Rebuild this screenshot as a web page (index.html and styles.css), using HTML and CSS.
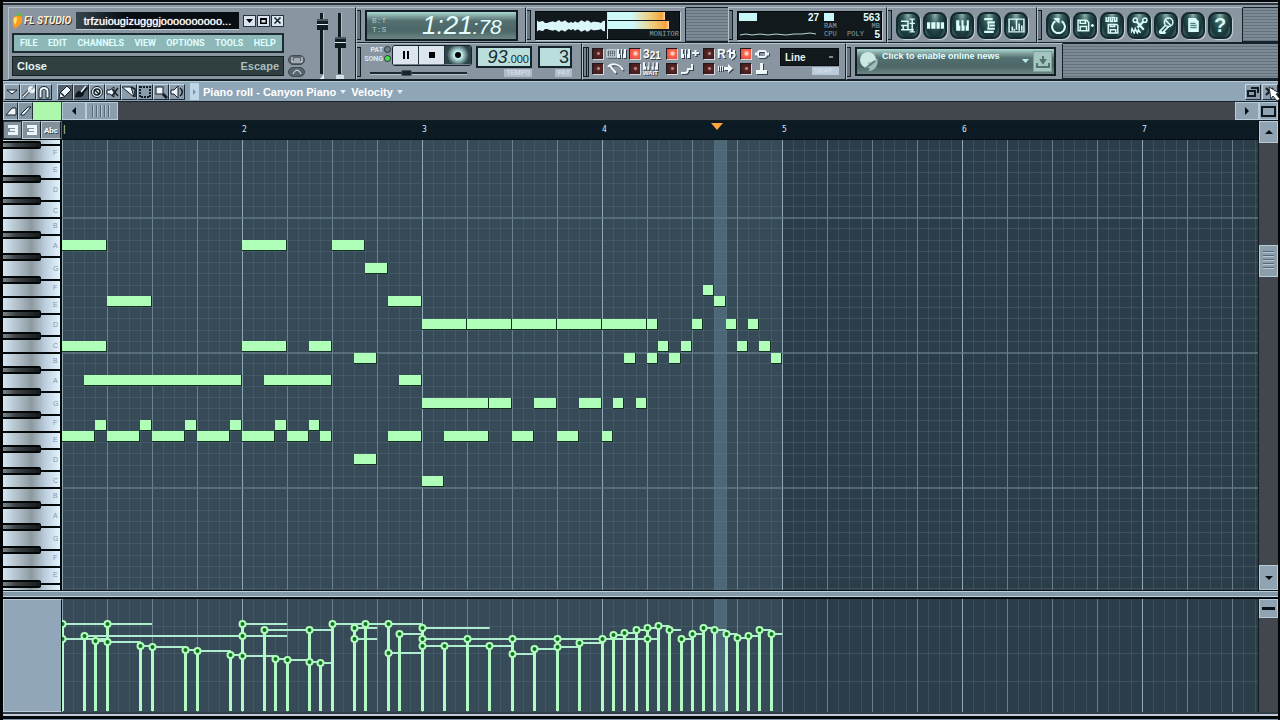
FILE: index.html
```html
<!DOCTYPE html>
<html lang="en">
<head>
<meta charset="utf-8">
<title>FL Studio - Piano roll</title>
<link rel="stylesheet" href="styles.css">
</head>
<body>
<div class="app">
  <header class="toolbar">
    <section class="panel main-panel">
      <div class="main-left">
        <div class="title-row">
          <svg class="fruit" width="12" height="18" viewBox="0 0 12 18"><path d="M5 5C4 3 5 1 7 0c-.500 1.500 0 2 0 3 1-1 3-1 4 0-2 0-3 1-3 2z" fill="#5cc32e"/><path d="M1 6c2-3 8-3 9 0 1 4-3 8-7 11C1 14 0 9 1 6z" fill="#ff9a1c"/><path d="M2 6c1-1 3-1 3 0 0 3-1 5-2 7-1-2-2-5-1-7z" fill="#ffe36b"/></svg>
          <span class="brand">FL STUDIO</span>
          <span class="song">trfzuiougizugggjoooooooooo...</span>
          <div class="win-buttons">
            <button aria-label="Minimize"><svg width="9" height="9" viewBox="0 0 9 9"><path d="M1 3h7L4.500 7z"/></svg></button>
            <button aria-label="Maximize"><svg width="9" height="9" viewBox="0 0 9 9"><path d="M1 2h7v6H1zM2.500 4v2.500h4V4z" fill-rule="evenodd"/></svg></button>
            <button aria-label="Close"><svg width="9" height="9" viewBox="0 0 9 9"><path d="M1.500 1.500l6 6M7.500 1.500l-6 6" stroke="#16242c" stroke-width="1.600"/></svg></button>
          </div>
        </div>
        <nav class="menu">
          <button>FILE</button><button>EDIT</button><button>CHANNELS</button><button>VIEW</button><button>OPTIONS</button><button>TOOLS</button><button>HELP</button>
        </nav>
        <div class="hint"><span>Close</span><span class="hint-key">Escape</span></div>
      </div>
      <div class="pills">
        <button class="pill" aria-label="Typing keyboard"><svg width="12" height="6" viewBox="0 0 12 6"><path d="M1 0v5h10V0M4 1v3M6 1v3M8 1v3" fill="none" stroke="#e5eef2"/></svg></button>
        <button class="pill" aria-label="Auto scroll"><svg width="12" height="6" viewBox="0 0 12 6"><path d="M2 5l2-3 2-1 2 1 2 3" fill="none" stroke="#e5eef2"/></svg></button>
      </div>
      <div class="faders">
        <div class="fader"><input class="volume" type="range" min="0" max="100" value="88" aria-label="Main volume"><svg width="8" height="5" viewBox="0 0 8 5"><path d="M6 0v5H2z" fill="#e8f1f6"/></svg></div>
        <div class="fader"><input class="pitch" type="range" min="0" max="100" value="52" aria-label="Main pitch"><svg width="8" height="5" viewBox="0 0 8 5"><path d="M0 1h8v4H0z" fill="#d5e2e9"/></svg></div>
      </div>
    </section>
    <div class="panel-rows">
      <div class="panel-row upper">
        <section class="panel time-panel"><i class="grip"></i>
          <div class="lcd time"><span class="units"><b>B:T</b><b>T:S</b></span><span class="big">1:21</span><span class="small">:78</span></div>
        </section>
        <section class="panel monitor-panel"><i class="grip"></i>
          <div class="dark monitor">
            <svg id="wave" width="71" height="27"></svg>
            <div class="levels"><div class="level left"></div><div class="level right"></div><span class="monitor-label">MONITOR</span></div>
          </div>
        </section>
        <div class="spacer"></div>
        <section class="panel cpu-panel"><i class="grip"></i>
          <div class="dark cpu">
            <div class="cpu-graph"><div class="cpu-top"><i class="cpu-bar"></i><b>27</b></div><svg width="78" height="8"><path d="M1 5l6-1 6 1 8-1 8 1 8-1 10 1 8-1 8 0 8-1 6 1" fill="none" stroke="#b8d5d8"/></svg></div>
            <div class="mem"><div class="cpu-top"><i class="mem-bar"></i><b>563</b></div><div class="tiny"><span>RAM</span><span>MB</span></div><div class="tiny"><span>CPU</span><span>POLY</span><b>5</b></div></div>
          </div>
        </section>
        <section class="panel views-panel"><i class="grip"></i>
          <button class="oct" aria-label="Playlist"><svg viewBox="0 0 16 16"><path d="M1 4h7M1 8h7M1 12h12M7.500 4v8M3 8v4M9 2h5M11.500 2v12M9 14h5M9 6h5"/></svg></button>
          <button class="oct" aria-label="Step sequencer"><svg viewBox="0 0 16 16"><path class="fill" d="M0 5h3v6H0zM4 5h4v6H4zM9 5h3v6H9zM13 5h3v6h-3z"/></svg></button>
          <button class="oct" aria-label="Piano roll"><svg viewBox="0 0 16 16"><path class="fill" d="M2 3h3v5h1v5H2zM7 3h2v5h1v5H7zM12 3h2v10h-3V8h1z"/></svg></button>
          <button class="oct" aria-label="Browser"><svg viewBox="0 0 16 16"><path d="M3 2h8M6 5h7M8 8h5M6 11h7M3 14h9" stroke-width="2"/><path d="M7 5v6"/></svg></button>
          <button class="oct" aria-label="Mixer"><svg viewBox="0 0 16 16"><path d="M1 2h14v12H1zM8 2v10"/><path d="M4 13V9M6 13v-2M10.500 13V6M13 13V8" stroke-width="1.500"/></svg></button>
        </section>
        <section class="panel tools-panel"><i class="grip"></i>
          <button class="oct" aria-label="Undo"><svg viewBox="0 0 16 16"><path d="M5 4a6 6 0 1 0 6 0" stroke-width="2"/><path class="fill" d="M3 1h6v5L6 4z"/></svg></button>
          <button class="oct" aria-label="Save new version"><svg viewBox="0 0 16 16"><path d="M1 3h8l2 2v8H1zM3 3v3h5V3M3 13V9h6v4M13 8h3M14.500 6.500v3"/></svg></button>
          <button class="oct" aria-label="Render"><svg viewBox="0 0 16 16"><path d="M2 0v4h2V0h2v4h2V0h2v4h2V0M4 7h8l1 1v7H4zM6 7v2h4V7M6 15v-3h5v3"/></svg></button>
          <button class="oct" aria-label="Edit audio"><svg viewBox="0 0 16 16"><path d="M5 4l7 8M12 4L6 10" stroke-width="2"/><circle cx="4" cy="3" r="2"/><circle cx="13" cy="3" r="2"/><path d="M0 15l1-4 2 4 1-4 2 4 1-3 2 3"/></svg></button>
          <button class="oct" aria-label="Record"><svg viewBox="0 0 16 16"><circle cx="10" cy="5" r="4"/><path d="M7 3l5 5M7 8l-5 5 2 2 6-6M2 13c-2 3 4 4 5 1" stroke-width="1.500"/></svg></button>
          <button class="oct" aria-label="Project info"><svg viewBox="0 0 16 16"><path class="fill" d="M3 1h7l3 3v10H3z"/><path d="M5 6h5M5 8h6M5 10h6" style="stroke:#4e8583"/></svg></button>
          <button class="oct help" aria-label="Help">?</button>
        </section>
        <div class="rack"></div>
      </div>
      <div class="panel-row lower">
        <section class="panel transport"><i class="grip"></i>
          <div class="transport-main">
            <div class="transport-top">
              <div class="modes"><label>PAT<input type="radio" name="mode"></label><label>SONG<input type="radio" name="mode" checked></label></div>
              <div class="play-buttons">
                <button aria-label="Pause"><svg width="12" height="12"><path d="M3 2h2v8H3zM7 2h2v8H7z"/></svg></button>
                <button aria-label="Stop"><svg width="12" height="12"><path d="M3 3h6v6H3z"/></svg></button>
                <button class="rec" aria-label="Record"><svg width="12" height="12"><circle cx="6" cy="6" r="3"/></svg></button>
              </div>
            </div>
            <input class="song-pos" type="range" min="0" max="100" value="36" aria-label="Song position">
          </div>
          <div class="readout"><div class="lcd2 tempo"><span>93</span><small>.000</small></div><span class="caption">TEMPO</span></div>
          <div class="readout"><div class="lcd2 pattern"><span>3</span></div><span class="caption">PAT</span></div>
        </section>
        <section class="panel switch-panel"><i class="grip wide"></i>
          <div class="switches">
            <label><input type="checkbox" aria-label="Typing keyboard to piano"><svg viewBox="0 0 20 14"><rect x="1" y="3" width="9" height="7"/><path d="M3 5h5M3 8h5" stroke-dasharray="1 1"/><path class="solid" d="M11 2h2v5h1v4h-3zM15 2h1v9h-1zM18 2h2v9h-3V7h1z"/></svg></label>
            <label><input type="checkbox" checked aria-label="Countdown"><span class="sw-text">3<sub>2</sub><sub>1</sub></span></label>
            <label><input type="checkbox" checked aria-label="Blend recording"><svg viewBox="0 0 20 14"><path class="solid" d="M1 2h2v5h1v4H1zM5 2h1v9H5zM8 2h2v9H7V7h1z"/><path d="M12 6h7M15.500 3v6" stroke-width="2"/></svg></label>
            <label><input type="checkbox" aria-label="Loop recording"><span class="sw-text">R</span><svg class="half" viewBox="0 0 10 14"><path d="M1 5l3-2v8M4 6h4v-3M8 6c2 3-1 5-3 6" stroke-width="2"/></svg></label>
            <label><input type="checkbox" checked aria-label="Multilink"><svg viewBox="0 0 20 14"><path d="M1 7h4M11 7h4" stroke-width="3"/><rect x="4" y="4" width="8" height="6" rx="2" stroke-width="2"/></svg></label>
            <label><input type="checkbox" aria-label="Metronome"><svg viewBox="0 0 20 14"><path d="M4 4l6 7M2 5C5 1 13 1 17 8" stroke-width="2"/></svg></label>
            <label><input type="checkbox" aria-label="Wait for input"><span class="wait"><svg viewBox="0 0 14 7"><path class="solid" d="M0 0h2v4h1v3H0zM5 0h1v7H4V4h1zM9 0h1v7H8V4h1zM12 0h2v7h-3V4h1z"/></svg>WAIT</span></label>
            <label><input type="checkbox" aria-label="Step editing"><svg viewBox="0 0 20 14"><path d="M1 11h4c3 0 3-2 3-4h4V2" stroke-width="2"/></svg></label>
            <label><input type="checkbox" aria-label="Auto scroll view"><svg viewBox="0 0 20 14"><path d="M1.500 4v5M3.500 4v5M5.500 4v5"/><path class="solid" d="M7 5h4V2l5 4.500L11 11V8H7z"/></svg></label>
            <label><input type="checkbox" aria-label="Note grouping"><svg viewBox="0 0 20 14"><path class="solid" d="M6 1h3v7h4v4H2V8h4z"/></svg></label>
          </div>
          <div class="readout snap"><select aria-label="Snap"><option>Line</option></select><span class="caption">SNAP</span></div>
        </section>
        <section class="panel news-panel"><i class="grip"></i>
          <div class="lcd news">
            <svg width="20" height="22" viewBox="0 0 20 22"><circle cx="9" cy="9" r="8" fill="#cce8e3"/><path d="M8 11c4 1 8-1 10-4 2 6-1 13-9 13 3-2 2-6-1-9z" fill="#a2bdb8"/><path d="M7 17l9-7" stroke="#5d7e7c" stroke-width="2"/></svg>
            <span class="news-text">Click to enable online news</span>
            <svg width="8" height="5"><path d="M0 0h7L3.500 4z" fill="#bcebe8"/></svg>
            <button aria-label="Download news"><svg width="14" height="14"><path d="M7 1v5M5 5h4L7 8z" fill="#53736f" stroke="#53736f" stroke-width="2"/><path d="M1 8v4h12V8" fill="none" stroke="#53736f" stroke-width="2"/></svg></button>
          </div>
        </section>
        <div class="rack"></div>
      </div>
    </div>
  </header>

  <div class="roll-title">
    <div class="tool-group">
      <button aria-label="Menu"><svg viewBox="0 0 14 14"><path d="M2 5h10l-5 4z" class="white"/></svg></button>
      <button aria-label="Tools"><svg viewBox="0 0 14 14"><path d="M2 12l6-6" class="thick"/><path d="M2 12l6-6M8 6c-1-3 1-5 3-4L9 4l2 2 2-2c1 3-2 5-5 2" class="line"/></svg></button>
      <button aria-label="Snap to grid"><svg viewBox="0 0 14 14"><path d="M2 13V6c0-6 10-6 10 0v7H9V6c0-2-4-2-4 0v7z" class="white"/></svg></button>
    </div>
    <div class="tool-group">
      <button class="on" aria-label="Draw"><svg viewBox="0 0 14 14"><path d="M1 13l1-5 7-7 4 4-7 7z" class="white"/><path d="M3 8l3 3" class="ink"/></svg></button>
      <button class="on" aria-label="Paint"><svg viewBox="0 0 14 14"><path d="M1 12c1-6 4-7 7-6l4-5 2 2-4 5c0 4-4 5-9 4z" fill="#0d171c"/><path d="M7 7l5-6" class="line"/></svg></button>
      <button aria-label="Delete"><svg viewBox="0 0 14 14"><circle cx="7" cy="7" r="5.500" class="white"/><circle cx="7" cy="7" r="3" class="ink"/><path d="M5 5l4 4" class="ink"/></svg></button>
      <button aria-label="Mute"><svg viewBox="0 0 14 14"><path d="M1 5h3l4-3v10L4 9H1z" class="white"/><path d="M6 4l6 7M12 3L6 11" class="ink"/></svg></button>
      <button aria-label="Slice"><svg viewBox="0 0 14 14"><path d="M0 2h9l3 10z" class="white"/><path d="M9 2l4 2v8" class="ink"/></svg></button>
      <button aria-label="Select"><svg viewBox="0 0 14 14"><rect x="2" y="2" width="10" height="10" fill="none" stroke="#142028" stroke-width="2" stroke-dasharray="2 1"/></svg></button>
      <button aria-label="Zoom"><svg viewBox="0 0 14 14"><rect x="2" y="2" width="7" height="7" class="white"/><path d="M9 9l4 4" class="thick"/></svg></button>
      <button aria-label="Playback"><svg viewBox="0 0 14 14"><path d="M1 5h3l4-4v12L4 9H1z" class="white"/><path d="M10 3c3 2 3 6 0 8" class="ink"/></svg></button>
    </div>
    <button class="tab-arrow" aria-label="Previous"><svg width="4" height="6"><path d="M0 0l3 3-3 3z" fill="#7892a8"/></svg></button>
    <button class="crumb">Piano roll - Canyon Piano<i></i></button>
    <button class="crumb">Velocity<i></i></button>
    <div class="roll-window">
      <button aria-label="Detach"><svg viewBox="0 0 14 14"><path d="M5 3h7v5M2 6h7v5H2z" fill="none" stroke="#111c23" stroke-width="2"/></svg></button>
      <button aria-label="Close piano roll"><svg viewBox="0 0 14 14"><path d="M3 3l8 8M10 3l-7 7" stroke="#111c23" stroke-width="2"/></svg></button>
    </div>
    <svg class="cursor" width="12" height="15" viewBox="0 0 12 15"><path d="M1 1l10 6-3 1 4 5-3 2-4-5-2 3z" fill="#fff" stroke="#27323a"/></svg>
  </div>

  <div class="scroll-row">
    <button class="flat" aria-label="Slide"><svg viewBox="0 0 14 14"><path d="M2 11l6-7h4v7z" class="white"/></svg></button>
    <button class="flat" aria-label="Porta"><svg viewBox="0 0 14 14"><path d="M2 10l7-7h3L5 11H2z" class="white"/></svg></button>
    <button class="note-color" aria-label="Note colour"></button>
    <button class="arrow left" aria-label="Scroll left"></button>
    <div class="h-track"><div class="h-thumb"></div></div>
    <button class="arrow right" aria-label="Scroll right"></button>
    <button class="zoom-box" aria-label="Zoom full"><i></i></button>
  </div>

  <main class="roll">
    <div class="key-tools">
      <button class="pressed" aria-label="Stamp"><svg viewBox="0 0 14 14"><path d="M2 2h10v10H2V9h7V8H4V6h5V5H2z" class="solid-white"/></svg></button>
      <button aria-label="Ghost notes"><svg viewBox="0 0 14 14"><path d="M2 2h10v10H2V9h7V8H4V6h5V5H2z" class="solid-white"/></svg></button>
      <button class="abc">Abc</button>
    </div>
    <div class="ruler"><span>|</span><span>2</span><span>3</span><span>4</span><span>5</span><span>6</span><span>7</span><i class="marker"></i></div>
    <button class="arrow up" aria-label="Scroll up"></button>
    <div class="keys"><svg id="keys"></svg></div>
    <div class="canvas"><svg id="notes"></svg></div>
    <div class="v-track"><div class="v-thumb"></div><button class="arrow down" aria-label="Scroll down"></button></div>
    <div class="divider"></div>
    <div class="vel-side"></div>
    <div class="canvas"><svg id="velocity"></svg></div>
    <div class="v-track vel-track"><button class="minus" aria-label="Toggle event size"><i></i></button></div>
  </main>
  <footer class="bottom-edge"></footer>
</div>
<script src="roll.js"></script>
</body>
</html>
```
FILE: styles.css
```css
* { box-sizing: border-box; }
body { margin: 0; background: #020405; font-family: "Liberation Sans", Arial, sans-serif; color: #fff; }
button { margin: 0; padding: 0; border: 0; background: none; font: inherit; color: inherit; display: flex; align-items: center; justify-content: center; }
input, select { margin: 0; }
svg { display: block; flex: none; }
.app { height: 100vh; display: flex; flex-direction: column; padding: 0 2px 0 3px; overflow: hidden; }

/* toolbar */
.toolbar { display: flex; flex: none; height: 81px; padding-left: 5px; border-top: 2px solid #05090d; box-shadow: inset 0 1px #aeb9c3, inset 0 3px #2c353d; background: #8b98a2; padding-top: 5px; border-bottom: 1px solid #121d24; }
.panel { display: flex; align-items: center; background: #8995a0; border: 1px solid #b3c0ca; border-right-color: #142129; border-bottom-color: #142129; flex: none; }
.main-panel { width: 348px; padding: 3px 4px 2px 3px; align-items: flex-start; }
.main-left { width: 272px; display: flex; flex-direction: column; gap: 3px; }
.title-row { display: flex; height: 19px; align-items: center; }
.brand { width: 52px; font: italic bold 10px Roboto, "Liberation Sans", sans-serif; white-space: nowrap; color: #fff0d6; text-shadow: 1px 1px #413226; }
.song { flex: 1; min-width: 0; height: 18px; font-size: 11px; line-height: 19px; background: linear-gradient(90deg, #35454b, #070d12 30%); border-bottom: 1px solid #c1ccd4; overflow: hidden; white-space: nowrap; text-align: center; text-shadow: 0 0 1px #fff; }
.win-buttons { display: flex; gap: 1px; margin-left: 4px; }
.win-buttons button { width: 13px; height: 12px; background: #dae5ef; border: 1px solid #25323c; }
.menu { display: flex; align-items: center; justify-content: space-between; height: 20px; padding: 0 6px; background: #8db8b7; border: 2px solid #1c2c31; color: #e0ffff; font: bold 9px Roboto, "Liberation Sans", sans-serif; }
.hint { display: flex; justify-content: space-between; height: 20px; padding: 0 4px; line-height: 19px; font-size: 11px; font-weight: bold; background: #304040; border: 1px solid #141f24; color: #e4f5f6; }
.hint-key { color: #aabebf; }
.pills { display: flex; flex-direction: column; gap: 2px; padding: 44px 0 0 4px; }
.pill { width: 17px; height: 10px; border-radius: 5px; background: #59646d; border: 1px solid #404b54; }
.faders { display: flex; gap: 4px; padding: 2px 0 0 10px; }
.fader { display: flex; flex-direction: column; align-items: center; }
.fader input { appearance: none; writing-mode: vertical-lr; direction: rtl; width: 14px; height: 61px; background: linear-gradient(90deg, transparent 5px, #101a21 5px, #101a21 8px, #b3c0c9 8px, #b3c0c9 9px, transparent 9px); }
.fader input::-webkit-slider-thumb { appearance: none; width: 11px; height: 11px; background: linear-gradient(#4c5962 2px, #131d24 2px, #131d24 5px, #e3edf2 5px, #e3edf2 6px, #131d24 6px); }

.panel-rows { flex: 1; min-width: 0; display: flex; flex-direction: column; }
.panel-row { display: flex; min-width: 0; }
.upper { height: 36px; }
.lower { height: 37px; }
.panel-row .panel { height: 100%; gap: 3px; }
.grip { width: 4px; height: 30px; margin-right: 1px; border: 1px solid #121d24; border-left: 0; background: #69757f; flex: none; align-self: center; }
.grip.wide { width: 6px; margin-right: 0; background: repeating-linear-gradient(90deg, #17232b 0 1px, #74818b 1px 3px); }
.rack, .spacer { flex: 1; background: repeating-linear-gradient(#7d8b97 0 2px, #65727d 2px 3px); border-top: 1px solid #17232b; border-bottom: 2px solid #17232b; }
.spacer { flex: none; width: 42px; }
.lcd { background: linear-gradient(#acd8d3 0, #7a9a97 5px, #536f70 9px, #4d6667 70%, #6b8684); border: 2px solid #111f23; color: #e3ffff; overflow: hidden; }
.dark { background: #11191d; border: 1px solid #05090c; box-shadow: 1px 1px #bdcad3; }

.time-panel { width: 170px; }
.time { width: 153px; height: 31px; display: flex; align-items: center; padding-left: 5px; font-style: italic; }
.units { display: flex; flex-direction: column; width: 50px; font: 8px "Liberation Mono", monospace; line-height: 9px; color: #aacac7; }
.units b { font-weight: normal; }
.big { font-size: 26px; line-height: 27px; }
.small { font-size: 21px; line-height: 24px; padding-top: 3px; }
.monitor-panel { width: 160px; }
.monitor { display: flex; height: 29px; width: 145px; }
.levels { flex: 1; border-left: 1px solid #cfe5e5; }
.level { height: 8px; margin-bottom: 1px; background: linear-gradient(90deg, #cdf9fb 40%, #efcb78 75%, #f4a43d 95%, #ffd7b0); }
.level.left { width: 57px; }
.level.right { width: 61px; }
.monitor-label { display: block; text-align: right; font: 7px "Liberation Mono", monospace; line-height: 9px; color: #8fa0a3; }
.cpu-panel { width: 159px; }
.cpu { display: flex; width: 145px; height: 29px; padding: 1px; }
.cpu-graph { width: 80px; display: flex; flex-direction: column; justify-content: space-between; }
.cpu-top { display: flex; justify-content: space-between; height: 9px; font-size: 10px; line-height: 10px; }
.cpu b { font: bold 10px "Liberation Sans", sans-serif; line-height: 9px; color: #e2ffff; }
.cpu-bar { width: 18px; height: 8px; background: #c8f7f8; }
.mem { flex: 1; margin-left: 5px; }
.mem-bar { width: 10px; height: 8px; background: #c8f7f8; }
.tiny { display: flex; justify-content: space-between; height: 8px; font: 7px "Liberation Mono", monospace; line-height: 8px; color: #8fa0a3; }
.views-panel { width: 150px; }
.tools-panel { width: 206px; }
.oct { width: 24px; height: 27px; border-radius: 8px; border: 2px solid #16292e; background: radial-gradient(ellipse at 50% 0, #8fb5b1 0, #35595a 35%, #173538 70%, #4f7d7a); box-shadow: 1px 1px 1px #c8d4da; color: #d8fbf8; }
.oct svg { width: 17px; height: 17px; fill: none; stroke: #d8fbf8; stroke-width: 1.400; }
.oct .fill { fill: #d8fbf8; stroke: none; }
.help { font-size: 20px; font-weight: bold; }

.transport { width: 226px; }
.panel-row .transport { gap: 0; }
.transport-main { width: 107px; margin-left: 3px; }
.transport-top { display: flex; }
.modes { width: 26px; }
.modes label { display: flex; justify-content: flex-end; align-items: center; height: 9px; font: bold 7px Roboto, "Liberation Sans", sans-serif; color: #dbe8ef; }
.modes input { appearance: none; width: 7px; height: 7px; margin-left: 1px; border: 1px solid #26333b; border-radius: 50%; background: #71808b; flex: none; }
.modes input:checked { background: #45e04b; }
.play-buttons { display: flex; margin-left: 1px; border: 1px solid #17232b; border-radius: 3px; overflow: hidden; }
.play-buttons button { width: 26px; height: 19px; background: #dce4ee; border-right: 1px solid #23323a; border-bottom: 1px solid #73828d; }
.play-buttons .rec { background: radial-gradient(circle, #c0eeee 25%, #2d4447 70%); border-right: 0; }
.song-pos { display: block; appearance: none; width: 97px; height: 10px; margin: 2px 0 0 5px; background: linear-gradient(transparent 4px, #1d2930 4px, #1d2930 6px, #b6c3cb 6px, #b6c3cb 7px, transparent 7px); }
.song-pos::-webkit-slider-thumb { appearance: none; width: 11px; height: 6px; background: #18232b; border: 1px solid #46525b; border-radius: 2px; }
.readout { display: flex; flex-direction: column; align-items: flex-end; gap: 1px; }
.lcd2 { display: flex; align-items: baseline; justify-content: flex-end; height: 22px; border: 2px solid #14232a; background: #b9dedb; color: #172a2e; font-size: 18px; line-height: 19px; font-style: italic; padding-right: 1px; }
.lcd2 small { font-size: 11px; font-style: normal; }
.tempo { width: 56px; }
.pattern { width: 34px; font-style: normal; }
.transport .readout { margin-left: 4px; }
.transport .readout + .readout { margin-left: 6px; }
.caption { height: 8px; padding: 0 2px; background: #afbdca; color: #cfdbe5; font: bold 7px Roboto, "Liberation Sans", sans-serif; line-height: 8px; }

.switch-panel { width: 264px; }
.switches { display: grid; grid-template-columns: repeat(5, 37px); grid-template-rows: 15px 15px; }
.switches label { display: flex; align-items: center; gap: 2px; }
.switches input { appearance: none; width: 12px; height: 12px; flex: none; border: 1px solid #1e1b1f; border-right-color: #d2d9df; border-bottom-color: #d2d9df; background: radial-gradient(circle at 55% 45%, #ae8580 0 1px, #5a2524 2px, #35191b); }
.switches input:checked { background: radial-gradient(circle at 55% 45%, #ffd8c6 0 1px, #fb6552 3px, #e34336); }
.switches label > svg { width: 20px; height: 14px; fill: none; stroke: #eef6fa; stroke-width: 1; filter: drop-shadow(1px 1px #34424c); }
.switches .solid { fill: #eef6fa; stroke: none; }
.switches label > .half { width: 10px; }
.sw-text { font-size: 12px; line-height: 12px; font-weight: bold; text-shadow: 1px 1px #34424c; }
.sw-text sub { font-size: 10px; line-height: 8px; vertical-align: -1px; }
.sw-text + svg { margin-left: -2px; }
.wait { font-size: 6px; line-height: 6px; font-weight: bold; text-shadow: 1px 1px #34424c; }
.wait svg { width: 15px; height: 8px; filter: drop-shadow(1px 1px #34424c); }
.snap { gap: 1px; }
.snap select { appearance: none; width: 59px; height: 18px; padding: 0 4px; border: 1px solid #070d10; background: linear-gradient(#7b8b90, #7b8b90) right 5px center / 4px 2px no-repeat #11191c; color: #e7f3f3; font: bold 10px "Liberation Sans", sans-serif; }
.snap .caption { width: 27px; background: #b9cbdb; }
.news-panel { width: 217px; }
.news { width: 201px; height: 29px; display: flex; align-items: center; padding: 0 2px; gap: 3px; }
.news-text { flex: 1; height: 9px; display: flex; align-items: flex-end; align-self: flex-start; overflow: hidden; font-size: 9px; line-height: 12px; font-weight: bold; white-space: nowrap; margin-top: 4px; }
.news button { width: 19px; height: 21px; background: #a4c6c1; border: 1px solid #7fa19d; }

/* piano roll caption */
.roll-title { position: relative; display: flex; align-items: center; height: 21px; flex: none; padding: 1px 0 1px 1px; background: #8fa5b8; border-top: 1px solid #b7c8d5; border-bottom: 1px solid #17232b; }
.tool-group { display: flex; margin-right: 5px; }
.tool-group button, .roll-window button { width: 16px; height: 16px; border: 1px solid #1e2b34; border-left-color: #c8d6e0; border-top-color: #c8d6e0; background: #8b9cad; }
.tool-group .on { background: #54616d; }
.roll-title button svg, .flat svg, .key-tools svg { width: 14px; height: 14px; }
.roll-title .tab-arrow svg { width: 4px; height: 6px; }
.white { fill: #edf5fa; stroke: #142028; stroke-width: 1; }
.solid-white { fill: #edf5fa; }
.line { fill: none; stroke: #edf5fa; stroke-width: 1.500; }
.thick { fill: none; stroke: #142028; stroke-width: 3; }
.ink { fill: none; stroke: #142028; stroke-width: 1.500; }
.tab-arrow { width: 9px; height: 17px; margin-right: 4px; background: #bed6e6; }
.roll-title .crumb { font-size: 11px; font-weight: bold; line-height: 16px; margin-right: 5px; white-space: nowrap; }
.crumb i { margin-left: 4px; border: 3px solid transparent; border-top: 4px solid #dfeaf2; border-bottom: 0; }
.roll-window { display: flex; gap: 1px; margin-left: auto; }
.cursor { position: absolute; right: -2px; top: 4px; }

/* scroll row */
.scroll-row { display: flex; height: 19px; flex: none; background: #42474d; border-bottom: 1px solid #121c23; }
.flat { width: 15px; background: #8496a4; border: 1px solid #bdcfdb; border-right-color: #23313a; }
.note-color { width: 28px; background: #aef8ad; }
.arrow { background: #8fa3b3; border: 1px solid #b7cbd9; }
.arrow::after { content: ""; border: 4px solid transparent; }
.arrow.left, .arrow.right { width: 24px; }
.arrow.left { margin-left: 1px; }
.arrow.left::after { border-right-color: #080f13; border-left: 0; }
.arrow.right::after { border-left-color: #080f13; border-right: 0; }
.arrow.up::after { border-bottom-color: #080f13; border-top: 0; }
.arrow.down::after { border-top-color: #080f13; border-bottom: 0; }
.h-track { flex: 1; background: #42474d; }
.h-thumb { width: 32px; height: 18px; border: 1px solid #b7cbd9; padding: 2px 5px; background: repeating-linear-gradient(90deg, #56697a 0 1px, #b4c5d2 1px 2px, #8c9eac 2px 4px) content-box, linear-gradient(#8c9eac, #8c9eac); }
.zoom-box { width: 19px; background: #8fa3b3; border: 1px solid #b7cbd9; }
.zoom-box i { width: 15px; height: 11px; border: 2px solid #0d171d; }

/* roll grid */
.roll { flex: 1; min-height: 0; display: grid; grid-template-columns: 59px minmax(0, 1fr) 19px; grid-template-rows: 19px minmax(0, 1fr) 9px 113px; }
.key-tools { display: flex; background: #52606b; border-bottom: 1px solid #0b1319; }
.key-tools button { width: 19px; height: 18px; border: 1px solid #c3d0da; border-right-color: #101a20; background: #82909c; }
.key-tools .pressed { border-color: #2b363e; }
.key-tools .abc { width: 20px; font: bold 8px Roboto, "Liberation Sans", sans-serif; text-shadow: 1px 1px #34424c; }
.ruler { position: relative; display: flex; overflow: hidden; background: #0b1a23; border-bottom: 1px solid #060e13; border-right: 1px solid #060e13; font: 8px "DejaVu Sans Mono", monospace; line-height: 18px; color: #dbe8ef; }
.ruler span { width: 180px; flex: none; }
.marker { position: absolute; left: 649px; top: 2px; border: 6px solid transparent; border-top: 7px solid #ffa43d; border-bottom: 0; }
.arrow.up { height: 22px; z-index: 1; }
.keys { background: #040708; padding-right: 1px; overflow: hidden; }
.keys svg, .canvas svg { width: 100%; height: 100%; }
.canvas { min-width: 0; overflow: hidden; border-right: 1px solid #101b22; background: #2b3d48; }
.v-track { position: relative; background: #42474d; display: flex; flex-direction: column; }
.v-thumb { height: 32px; margin-top: 105px; border: 1px solid #b7cbd9; padding: 5px 3px; background: repeating-linear-gradient(#56697a 0 1px, #b9c9d4 1px 2px, #8c9eac 2px 4px) content-box, linear-gradient(#8c9eac, #8c9eac); }
.arrow.down { height: 25px; margin-top: auto; }
.divider { grid-column: 1 / -1; margin-bottom: 1px; background: #8499a8; border-top: 1px solid #0d171d; border-bottom: 1px solid #0d171d; box-shadow: inset 0 1px #bed0db, inset 0 -1px #bed0db; }
.vel-side { background: #92a6b9; border: 1px solid #b9cad6; border-right: 1px solid #07100f; }
.minus { height: 19px; background: #8fa3b3; border: 1px solid #b7cbd9; }
.minus i { width: 13px; height: 3px; background: #0b1319; }
.bottom-edge { flex: none; height: 8px; background: linear-gradient(#323c46 2px, #c1cbd6 2px, #c1cbd6 4px, #03080d 4px, #03080d 7px, #8196ae 7px); }

/* drawn content */
.note { fill: #afffb9; }
.note-shadow { fill: #12301f; }
.past { fill: #364a57; }
.playhead { fill: #4c6778; }
.g-step { stroke: #647c89; stroke-opacity: .3; }
.g-beat { stroke: #788f9c; stroke-opacity: .8; }
.g-bar { stroke: #90a9b6; }
.g-row { stroke: #647c89; stroke-opacity: .3; }
.g-octave { stroke: #647c89; stroke-opacity: .7; stroke-width: 2; }
.stem { stroke: #b1fac4; stroke-width: 3; }
.stem-line { stroke: #aeeecf; stroke-width: 2; }
.head { fill: #126d25; stroke: #affdb9; stroke-width: 2; }
.key-name { font: 7px "Liberation Sans", sans-serif; fill: #8595a6; }
```
FILE: roll.js
```js
const STEP = 11.255, ROW = 11.25, FIRST_OCTAVE = 78, SONG_END = 64;
const NS = "http://www.w3.org/2000/svg";

function add(parent, tag, attrs, text) {
  const el = document.createElementNS(NS, tag);
  for (const k in attrs) el.setAttribute(k, attrs[k]);
  if (text) el.textContent = text;
  parent.appendChild(el);
  return el;
}
const line = (p, c, x1, y1, x2, y2) => add(p, "line", { class: c, x1, y1, x2, y2 });
const snap = v => Math.floor(v) + 0.5;

function drawColumns(svg) {
  const w = svg.clientWidth, h = svg.clientHeight;
  add(svg, "rect", { class: "past", width: SONG_END * STEP, height: h });
  add(svg, "rect", { class: "playhead", x: 652, width: 13, height: h });
  for (let s = 0; s * STEP < w; s++) {
    const cls = s % 16 === 0 ? "g-bar" : s % 4 === 0 ? "g-beat" : "g-step";
    line(svg, cls, snap(s * STEP), 0, snap(s * STEP), h);
  }
}

/* row: [start, length] pairs, rows counted down from the first octave line */
const notes = {
  2: [[0, 4], [16, 4], [24, 3]],
  4: [[27, 2]],
  6: [[57, 1]],
  7: [[4, 4], [29, 3], [58, 1]],
  9: [[32, 4], [36, 4], [40, 4], [44, 4], [48, 4], [52, 1], [56, 1], [59, 1], [61, 1]],
  11: [[0, 4], [16, 4], [22, 2], [53, 1], [55, 1], [60, 1], [62, 1]],
  12: [[26, 2], [50, 1], [52, 1], [54, 1], [63, 1]],
  14: [[2, 14], [18, 6], [30, 2]],
  16: [[32, 6], [38, 2], [42, 2], [46, 2], [49, 1], [51, 1]],
  18: [[3, 1], [7, 1], [11, 1], [15, 1], [19, 1], [22, 1]],
  19: [[0, 3], [4, 3], [8, 3], [12, 3], [16, 3], [20, 2], [23, 1], [29, 3], [34, 4], [40, 2], [44, 2], [48, 1]],
  21: [[26, 2]],
  23: [[32, 2]]
};

/* start, length, height of the handle from the top of the lane */
const velocities = [
  [0, 4, 24], [4, 4, 24], [0, 4, 39], [2, 14, 36], [3, 1, 41], [4, 3, 42], [7, 1, 46], [8, 3, 47],
  [11, 1, 50], [12, 3, 51], [15, 1, 55], [16, 3, 56], [19, 1, 59], [20, 2, 60], [22, 1, 62], [23, 1, 63],
  [16, 4, 24], [16, 4, 36], [18, 6, 30], [22, 2, 30], [24, 3, 24], [26, 2, 28], [26, 2, 39], [27, 2, 24],
  [29, 3, 24], [29, 3, 53], [30, 2, 34], [32, 6, 28], [32, 4, 39], [32, 2, 46], [34, 4, 46], [36, 4, 39],
  [38, 2, 46], [40, 4, 39], [40, 2, 54], [42, 2, 49], [44, 4, 39], [44, 2, 47], [46, 2, 43], [48, 4, 39],
  [49, 1, 35], [50, 1, 33], [51, 1, 30], [52, 1, 28], [52, 1, 39], [53, 1, 26], [54, 1, 30], [55, 1, 39],
  [56, 1, 34], [57, 1, 28], [58, 1, 30], [59, 1, 34], [60, 1, 38], [61, 1, 36], [62, 1, 30], [63, 1, 34]
];

function drawNotes() {
  const svg = document.getElementById("notes");
  drawColumns(svg);
  const w = svg.clientWidth, h = svg.clientHeight;
  for (let r = -6; FIRST_OCTAVE + r * ROW < h; r++) {
    const y = r % 12 === 0 ? Math.round(FIRST_OCTAVE + r * ROW) : snap(FIRST_OCTAVE + r * ROW - .5);
    line(svg, r % 12 === 0 ? "g-octave" : "g-row", 0, y, w, y);
  }
  for (const r in notes) for (const [s, n] of notes[r]) {
    const x = Math.floor(s * STEP), y = Math.floor(FIRST_OCTAVE + r * ROW);
    const wd = Math.floor((s + n) * STEP) - x;
    add(svg, "rect", { class: "note-shadow", x: x, y: y, width: wd, height: 11 });
    add(svg, "rect", { class: "note", x: x, y: y, width: wd - 1, height: 10 });
  }
}

function drawVelocity() {
  const svg = document.getElementById("velocity");
  drawColumns(svg);
  const w = svg.clientWidth, h = svg.clientHeight;
  for (const y of [27.5, 54.5, 82.5]) line(svg, "g-row", 0, y, w, y);
  for (const [s, n, y] of velocities) {
    line(svg, "stem-line", s * STEP, y + 1, (s + n) * STEP, y + 1);
    line(svg, "stem", snap(s * STEP), y + 1, snap(s * STEP), h - 1);
  }
  for (const [s, n, y] of velocities) add(svg, "circle", { class: "head", cx: snap(s * STEP), cy: y + 1, r: 3 });
}

function drawKeys() {
  const svg = document.getElementById("keys"), h = svg.clientHeight;
  const defs = add(svg, "defs", {});
  const grad = (id, stops) => {
    const g = add(defs, "linearGradient", { id });
    for (const [o, c] of stops) add(g, "stop", { offset: o, "stop-color": c });
  };
  grad("ivory", [[0, "#d6e6f1"], [.2, "#b8c8d3"], [.5, "#8d999f"], [.75, "#bed0e0"], [1, "#e4f3fd"]]);
  grad("ebony", [[0, "#7b8489"], [.35, "#3b4042"], [1, "#15191b"]]);
  add(svg, "rect", { width: 57, height: h, fill: "url(#ivory)" });
  const names = { 0.7: "B", 2.5: "A", 4.5: "G", 6.2: "F", 7.7: "E", 9.5: "D", 11.4: "C" };
  for (let oct = -1; oct < 4; oct++) {
    const top = FIRST_OCTAVE + oct * 12 * ROW;
    for (const r of [0, 7]) add(svg, "rect", { y: Math.round(top + r * ROW) - 1, width: 57, height: 2, fill: "#05090b" });
    for (const r of [1, 3, 5, 8, 10]) {
      const y = Math.round(top + (r + .5) * ROW);
      add(svg, "rect", { y: y - 1, width: 57, height: 2, fill: "#05090b" });
      add(svg, "rect", { x: -3, y: y - 4, width: 41, height: 8, rx: 2, fill: "#030607" });
      add(svg, "rect", { y: y - 2, width: 37, height: 4, fill: "url(#ebony)" });
    }
    for (const k in names) {
      const y = top + k * ROW + 2;
      if (y > 8 && y < h - 4) add(svg, "text", { class: "key-name", x: 50, y }, names[k]);
    }
  }
}

function drawWave() {
  const svg = document.getElementById("wave");
  let top = "", bottom = "";
  for (let x = 1; x < 70; x += 2) {
    const a = 3 + Math.abs(Math.sin(x * 1.7) * 2 + Math.sin(x * .6));
    top += `${x},${14 - a} `;
    bottom = `${x},${14 + a} ` + bottom;
  }
  add(svg, "polygon", { points: top + bottom, fill: "#d9f7f8" });
}

drawNotes();
drawVelocity();
drawKeys();
drawWave();
```
